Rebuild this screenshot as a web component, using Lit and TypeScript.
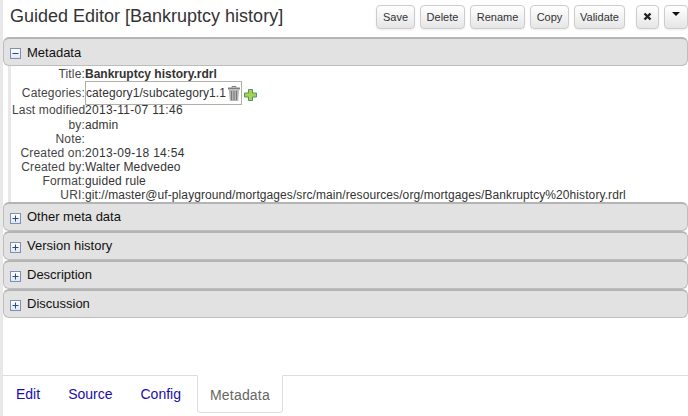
import { LitElement, html, css, svg } from "lit";
import { customElement } from "lit/decorators.js";

const rows: [string, string, string][] = [
  ["Last modified", "2013-11-07 11:46", "num"],
  ["by:", "admin", "txt"],
  ["Note:", "", "txt"],
  ["Created on:", "2013-09-18 14:54", "num"],
  ["Created by:", "Walter Medvedeo", "txt"],
  ["Format:", "guided rule", "txt"],
  ["URI:", "git://master@uf-playground/mortgages/src/main/resources/org/mortgages/Bankruptcy%20history.rdrl", "uri"],
];

const box = (open: boolean) => html`<svg class="tog" width="11" height="11" viewBox="0 0 11 11">
  <defs><linearGradient id="tg" x1="0" y1="0" x2="0" y2="1"><stop offset="0" stop-color="#ffffff"/><stop offset="1" stop-color="#dfe6f2"/></linearGradient></defs>
  <rect x="0.5" y="0.5" width="10" height="10" fill="url(#tg)" stroke="#7f8fb0"/>
  ${svg`<path d="M2.5 5.5h6" stroke="#2a4a80" fill="none"/>`}
  ${open ? "" : svg`<path d="M5.5 2.5v6" stroke="#2a4a80" fill="none"/>`}
</svg>`;

@customElement("app-root")
export class AppRoot extends LitElement {
  static styles = css`
    :host { display: flex; width: 688px; height: 416px; overflow: hidden; background: #fff; font-family: "Liberation Sans", Arial, sans-serif; color: #333; }
    .strip { width: 3px; flex: none; background: #e8e8e8; }
    .main { flex: 1; min-width: 0; display: flex; flex-direction: column; }
    .head { height: 37px; flex: none; display: flex; align-items: center; box-sizing: border-box; padding: 0 0 5px 7px; }
    h1 { margin: 0; font-size: 18px; font-weight: 400; line-height: 30px; color: #333; flex: 1; }
    .btns { display: flex; gap: 5px; margin-top: 1px; }
    .btn { box-sizing: border-box; height: 24px; border: 1px solid #ccc; border-radius: 4px; background: linear-gradient(#fff, #e6e6e6); font-size: 11px; color: #333; display: flex; align-items: center; justify-content: center; box-shadow: 0 1px 2px rgba(0,0,0,.08); }
    .w39 { width: 39px; }
    .w44 { width: 45px; }
    .w54 { width: 55px; }
    .w50 { width: 51px; }
    .btns .x { margin-left: 6px; width: 23px; }
    .btns .c { width: 24px; padding-bottom: 5px; }
    .acc { display: flex; flex-direction: column; }
    .ph { box-sizing: border-box; height: 29px; background: #e2e2e2; border: 1px solid #bdbdbd; border-top: 2px solid #b4b4b4; border-radius: 6px; display: flex; align-items: center; padding: 0 0 0 6px; gap: 6px; font-size: 13px; color: #111; }
    .tog { flex: none; position: relative; top: 1px; }
    .lab { line-height: 14px; padding-bottom: 1px; }
    .lab.f { line-height: normal; padding: 0; }
    .body { box-sizing: border-box; height: 136px; margin-left: 5px; border-left: 3px solid #e8e8e8; padding-left: 1px; font-size: 12px; line-height: 14px; }
    .row { display: grid; grid-template-columns: 73px 1fr; white-space: nowrap; }
    .cat + .row { padding-bottom: 1px; }
    .l { text-align: right; color: #444; letter-spacing: 0.16px; }
    .v { color: #333; }
    .num { letter-spacing: 0.31px; }
    .txt { letter-spacing: 0.13px; }
    .uri { letter-spacing: 0.083px; }
    .t { padding-top: 1px; }
    .b { font-weight: 700; }
    .cat { height: 22px; }
    .catv { display: flex; align-items: center; height: 24px; }
    .catl { line-height: 24px; }
    .catbox { box-sizing: border-box; width: 157px; height: 24px; border: 1px solid #b0b0a8; display: flex; align-items: center; letter-spacing: 0.08px; flex: none; }
    .catbox svg { margin-left: 2px; flex: none; }
    .plus { margin-left: 2px; margin-top: 3px; flex: none; }
    .tabs { margin-top: auto; box-sizing: border-box; height: 41px; border-top: 1px solid #ddd; display: flex; padding: 0; }
    .tab { box-sizing: border-box; font-size: 14px; line-height: 20px; padding: 8px 13px; color: #1a0dab; margin-right: 2px; }
    .tab.a { color: #666; margin-top: -1px; margin-left: 1px; height: 38px; border: 1px solid #ddd; border-top-color: transparent; border-radius: 0 0 4px 4px; background: #fff; padding: 9px 12px; margin-right: 0; letter-spacing: 0.2px; }
  `;

  render() {
    const btns: [string, string][] = [["Save", "w39"], ["Delete", "w44"], ["Rename", "w54"], ["Copy", "w39"], ["Validate", "w50"]];
    return html`
      <div class="strip"></div>
      <div class="main">
        <div class="head">
          <h1>Guided Editor [Bankruptcy history]</h1>
          <div class="btns">
            ${btns.map(([b, w]) => html`<div class="btn ${w}">${b}</div>`)}
            <div class="btn x"><svg width="9" height="9" viewBox="0 0 9 9"><path d="M1.500 1.500l6 6M7.500 1.500l-6 6" stroke="#222" stroke-width="2.400"/></svg></div>
            <div class="btn c"><svg width="8" height="4" viewBox="0 0 8 4"><path d="M0 0h8L4 4z" fill="#111"/></svg></div>
          </div>
        </div>
        <div class="acc">
          <div class="ph">${box(true)}<span class="lab f">Metadata</span></div>
          <div class="body">
            <div class="row"><div class="l t">Title:</div><div class="v t b">Bankruptcy history.rdrl</div></div>
            <div class="row cat">
              <div class="l catl">Categories:</div>
              <div class="catv">
                <div class="catbox">category1/subcategory1.1
                  <svg width="12" height="15" viewBox="0 0 12 15">
                    <path d="M0 2.500h12" stroke="#7f7f7f" stroke-width="2"/><path d="M4 1.500V.5h4v1" stroke="#7f7f7f" fill="none"/>
                    <path d="M1 4h10l-.8 11H1.800z" fill="#b4b4b4"/>
                    <path d="M3.500 5v9M6 5v9M8.500 5v9" stroke="#787878"/>
                  </svg>
                </div>
                <svg class="plus" width="13" height="12" viewBox="0 0 13 12"><path d="M4.500 .5h4v3.500H12.500v4H8.500v3.500h-4V8H.5V4h4z" fill="#a9cf57" stroke="#4a9a58"/></svg>
              </div>
            </div>
            ${rows.map(([l, v, k]) => html`<div class="row"><div class="l">${l}</div><div class="v ${k}">${v}</div></div>`)}
          </div>
          ${["Other meta data", "Version history", "Description", "Discussion"].map((p) => html`<div class="ph">${box(false)}<span class="lab">${p}</span></div>`)}
        </div>
        <div class="tabs">
          ${["Edit", "Source", "Config"].map((t) => html`<div class="tab">${t}</div>`)}
          <div class="tab a">Metadata</div>
        </div>
      </div>
    `;
  }
}
